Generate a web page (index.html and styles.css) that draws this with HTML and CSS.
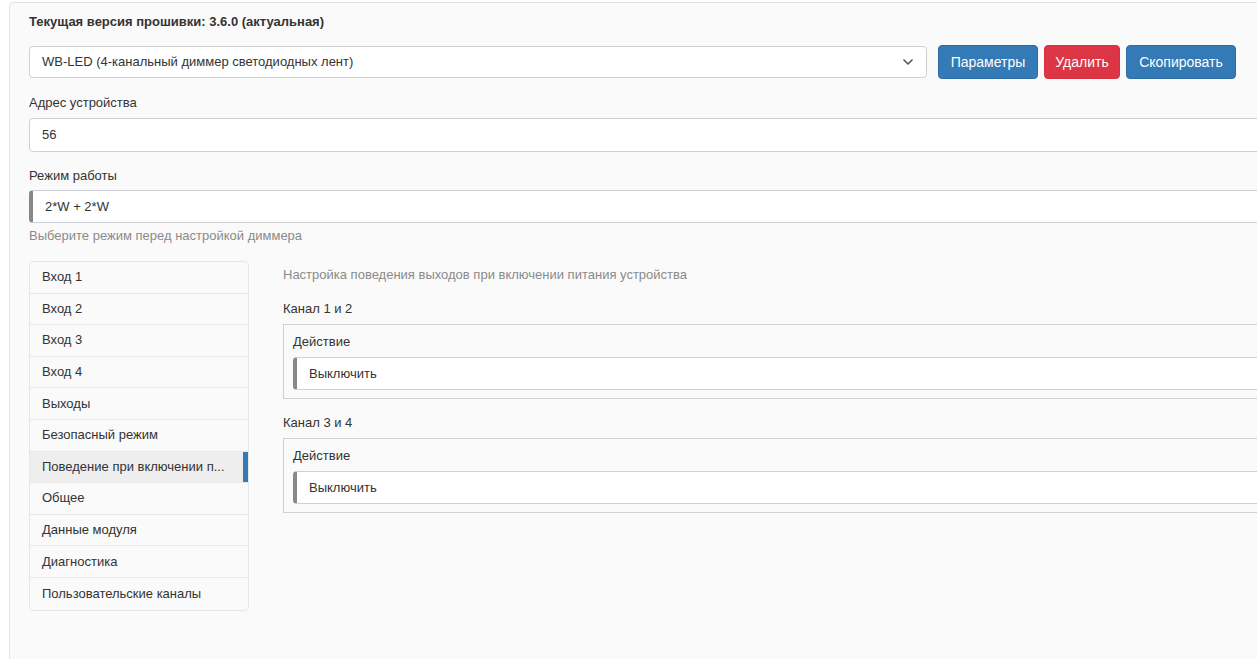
FILE: index.html
```html
<!DOCTYPE html>
<html lang="ru">
<head>
<meta charset="utf-8">
<title>WB-LED</title>
<link rel="stylesheet" href="styles.css">
</head>
<body>
<div class="panel">
  <div class="fw-title">Текущая версия прошивки: 3.6.0 (актуальная)</div>

  <div class="device-row">
    <div class="select-box device-select">
      <span>WB-LED (4-канальный диммер светодиодных лент)</span>
      <svg class="chevron" width="10" height="6" viewBox="0 0 10 6"><path d="M1 1 L5 5 L9 1" fill="none" stroke="#555" stroke-width="1.6" stroke-linecap="round" stroke-linejoin="round"/></svg>
    </div>
    <button class="btn btn-primary btn-params">Параметры</button>
    <button class="btn btn-danger btn-delete">Удалить</button>
    <button class="btn btn-primary btn-copy">Скопировать</button>
  </div>

  <div class="form-group address">
    <div class="label">Адрес устройства</div>
    <div class="input">56</div>
  </div>

  <div class="form-group mode">
    <div class="label">Режим работы</div>
    <div class="input marked">2*W + 2*W</div>
    <div class="help">Выберите режим перед настройкой диммера</div>
  </div>

  <div class="settings">
    <ul class="nav">
      <li>Вход 1</li>
      <li>Вход 2</li>
      <li>Вход 3</li>
      <li>Вход 4</li>
      <li>Выходы</li>
      <li>Безопасный режим</li>
      <li class="active">Поведение при включении п...</li>
      <li>Общее</li>
      <li>Данные модуля</li>
      <li>Диагностика</li>
      <li>Пользовательские каналы</li>
    </ul>
    <div class="content">
      <div class="descr">Настройка поведения выходов при включении питания устройства</div>
      <div class="channel">
        <div class="ch-title">Канал 1 и 2</div>
        <div class="ch-box">
          <div class="label">Действие</div>
          <div class="input marked">Выключить</div>
        </div>
      </div>
      <div class="channel">
        <div class="ch-title">Канал 3 и 4</div>
        <div class="ch-box">
          <div class="label">Действие</div>
          <div class="input marked">Выключить</div>
        </div>
      </div>
    </div>
  </div>
</div>
</body>
</html>
```

FILE: styles.css
```css
html, body {
  margin: 0;
  padding: 0;
  background: #ffffff;
  overflow: hidden;
  height: 659px;
}
body {
  font-family: "Liberation Sans", Arial, sans-serif;
  font-size: 13px;
  line-height: 18px;
  color: #333333;
}
.panel {
  margin: 2px 0 0 9px;
  width: 1320px;
  min-height: 700px;
  box-sizing: border-box;
  background: #fafafa;
  border: 1px solid #e4e4e4;
  border-top-left-radius: 4px;
  padding: 10px 19px;
}
.fw-title {
  font-weight: bold;
  font-size: 13px;
  line-height: 18px;
}
.device-row {
  display: flex;
  align-items: center;
  width: 1207px;
  margin-top: 14px;
}
.select-box {
  flex: 1;
  height: 32px;
  box-sizing: border-box;
  background: #fff;
  border: 1px solid #cdd0d6;
  border-radius: 4px;
  display: flex;
  align-items: center;
  justify-content: space-between;
  padding: 0 13px 0 12px;
  margin-right: 11px;
}
.chevron { display: block; }
.btn {
  font-family: "Liberation Sans", Arial, sans-serif;
  font-size: 14px;
  line-height: 20px;
  height: 34px;
  padding: 6px 0;
  text-align: center;
  border: 1px solid transparent;
  border-radius: 4px;
  color: #fff;
  margin-left: 6px;
  cursor: pointer;
}
.btn-params { width: 100px; margin-left: 0; }
.btn-delete { width: 76px; }
.btn-copy { width: 110px; }
.btn-primary { background: #337ab7; border-color: #2e6da4; }
.btn-danger { background: #dc3545; border-color: #d9303f; }

.form-group { margin-top: 15px; }
.label { margin-bottom: 6px; }
.input {
  height: 33px;
  box-sizing: border-box;
  background: #fff;
  border: 1px solid #cdd0d6;
  border-radius: 4px;
  padding: 0 12px;
  display: flex;
  align-items: center;
}
.form-group.address .input { height: 34px; }
.form-group.mode .label { margin-bottom: 5px; }
.input.marked {
  border-left: 4px solid #888888;
}
.help {
  color: #8a8a8a;
  margin-top: 4px;
}

.settings {
  display: grid;
  grid-template-columns: 220px 1fr;
  column-gap: 34px;
  margin-top: 16px;
  align-items: start;
}
.nav {
  list-style: none;
  margin: 0;
  padding: 0;
  border: 1px solid #e6e6e6;
  border-radius: 4px;
  background: #fafafa;
}
.nav li {
  height: 31.6px;
  box-sizing: border-box;
  padding: 0 12px;
  display: flex;
  align-items: center;
  border-bottom: 1px solid #e8e8e8;
  white-space: nowrap;
  overflow: hidden;
}
.nav li:last-child { border-bottom: none; }
.nav li.active {
  background: #eeeeee;
  box-shadow: inset -5px 0 0 #337ab7;
}
.content { padding-top: 5px; }
.descr { color: #8a8a8a; }
.channel { margin-top: 16px; }
.channel + .channel { margin-top: 15px; }
.ch-title { margin-bottom: 6px; }
.ch-box {
  border: 1px solid #cdd0d6;
  border-right: none;
  padding: 8px 0 8px 9px;
}
.ch-box .label { margin-bottom: 6px; }
.ch-box .input { height: 33px; border-right: none; border-radius: 4px 0 0 4px; }
```
